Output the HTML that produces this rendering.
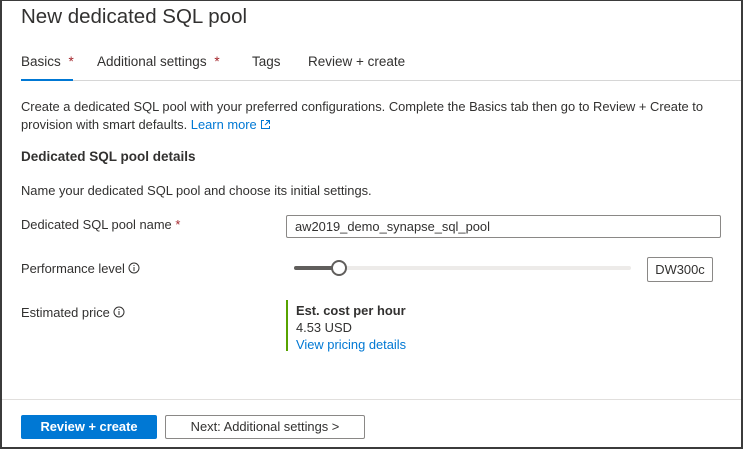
<!DOCTYPE html>
<html><head><style>
*{margin:0;padding:0;box-sizing:border-box}
body{width:743px;height:449px;overflow:hidden;background:#fff;font-family:"Liberation Sans",sans-serif;color:#323130;position:relative}
.frame{position:absolute;left:0;top:0;width:743px;height:449px;border:2px solid #3b3b3b;border-top-width:1px}
.a{position:absolute;white-space:nowrap}
.t{font-size:12.9px}
.link{color:#0078d4}
</style></head><body>
<div class="frame"></div>
<div class="a" style="left:21px;top:5px;font-size:20.5px;color:#323130">New dedicated SQL pool</div>
<div class="a t" style="left:21px;top:54px;font-size:13.5px">Basics <span style="color:#a4262c;margin-left:4px">*</span></div>
<div class="a t" style="left:97px;top:54px;font-size:13.5px">Additional settings <span style="color:#a4262c;margin-left:4px">*</span></div>
<div class="a t" style="left:252px;top:54px;font-size:13.5px">Tags</div>
<div class="a t" style="left:308px;top:54px;font-size:13.5px">Review + create</div>
<div class="a" style="left:21px;top:80px;width:720px;height:1px;background:#d6d6d6"></div>
<div class="a" style="left:21px;top:79px;width:52px;height:2px;background:#0078d4"></div>
<div class="a t" style="left:21px;top:98px;line-height:18px">Create a dedicated SQL pool with your preferred configurations. Complete the Basics tab then go to Review + Create to<br>provision with smart defaults. <span class="link">Learn more</span> <svg width="11" height="11" viewBox="0 0 11 11" style="vertical-align:-1px"><path d="M4 1.5H1.5v8h8V7M6 1.5h3.5V5M9.5 1.5 5 6" fill="none" stroke="#0078d4" stroke-width="1"/></svg></div>
<div class="a" style="left:21px;top:149px;font-size:13.5px;font-weight:bold;color:#323130">Dedicated SQL pool details</div>
<div class="a t" style="left:21px;top:183px">Name your dedicated SQL pool and choose its initial settings.</div>
<div class="a t" style="left:21px;top:217px">Dedicated SQL pool name <span style="color:#a4262c">*</span></div>
<div class="a t" style="left:286px;top:215px;width:435px;height:23px;border:1px solid #8a8886;border-radius:2px;padding:3px 8px">aw2019_demo_synapse_sql_pool</div>
<div class="a t" style="left:21px;top:261px">Performance level <svg width="12" height="12" viewBox="0 0 12 12" style="vertical-align:-1px"><circle cx="6" cy="6" r="5" fill="none" stroke="#323130"/><path d="M6 5v4M6 3v1" stroke="#323130"/></svg></div>
<div class="a" style="left:294px;top:266px;width:337px;height:4px;border-radius:2px;background:#edebe9"></div>
<div class="a" style="left:294px;top:266px;width:45px;height:4px;border-radius:2px;background:#605e5c"></div>
<div class="a" style="left:331px;top:260px;width:16px;height:16px;border-radius:50%;background:#fff;border:2px solid #605e5c"></div>
<div class="a t" style="left:647px;top:257px;width:66px;height:25px;border:1px solid #8a8886;border-radius:2px;text-align:center;line-height:23px">DW300c</div>
<div class="a t" style="left:21px;top:305px">Estimated price <svg width="12" height="12" viewBox="0 0 12 12" style="vertical-align:-1px"><circle cx="6" cy="6" r="5" fill="none" stroke="#323130"/><path d="M6 5v4M6 3v1" stroke="#323130"/></svg></div>
<div class="a" style="left:286px;top:300px;width:2px;height:51px;background:#57a300"></div>
<div class="a t" style="left:296px;top:302px;line-height:17px"><span style="font-weight:bold">Est. cost per hour</span><br>4.53 USD<br><span class="link">View pricing details</span></div>
<div class="a" style="left:2px;top:399px;width:739px;height:1px;background:#e1dfdd"></div>
<div class="a" style="left:21px;top:415px;width:136px;height:24px;background:#0078d4;border-radius:2px;color:#fff;font-size:12.9px;font-weight:bold;text-align:center;line-height:24px">Review + create</div>
<div class="a" style="left:165px;top:415px;width:200px;height:24px;border:1px solid #8a8886;border-radius:2px;font-size:12.9px;text-align:center;line-height:22px">Next: Additional settings &gt;</div>
</body></html>
